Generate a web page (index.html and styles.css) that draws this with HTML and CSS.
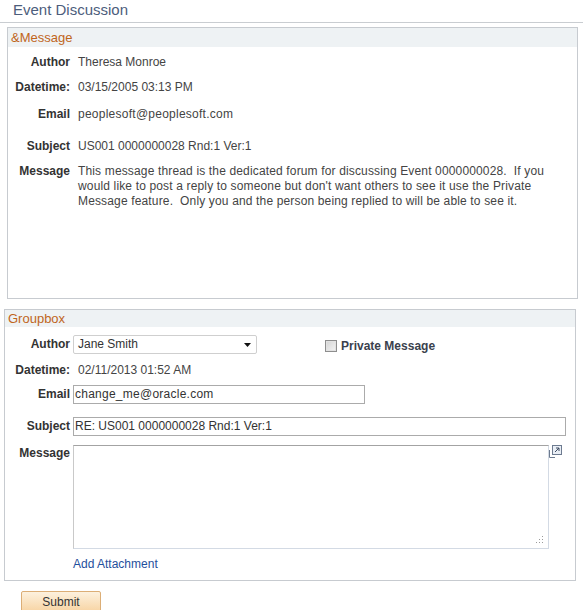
FILE: index.html
```html
<!DOCTYPE html>
<html>
<head>
<meta charset="utf-8">
<title>Event Discussion</title>
<link rel="stylesheet" href="styles.css">
</head>
<body>
<div class="page-header">
  <h1 class="page-title">Event Discussion</h1>
</div>

<section class="box box-message">
  <div class="box-head">&amp;Message</div>
  <div class="row r1"><span class="lbl">Author</span><span class="val">Theresa Monroe</span></div>
  <div class="row r2"><span class="lbl">Datetime:</span><span class="val">03/15/2005 03:13 PM</span></div>
  <div class="row r3"><span class="lbl">Email</span><span class="val wide">peoplesoft@peoplesoft.com</span></div>
  <div class="row r4"><span class="lbl">Subject</span><span class="val">US001 0000000028 Rnd:1 Ver:1</span></div>
  <div class="row r5"><span class="lbl">Message</span><span class="val msg">This message thread is the dedicated forum for discussing Event 0000000028.&nbsp; If you<br>would like to post a reply to someone but don't want others to see it use the Private<br>Message feature.&nbsp; Only you and the person being replied to will be able to see it.</span></div>
</section>

<section class="box box-group">
  <div class="box-head">Groupbox</div>
  <div class="frow g1">
    <span class="flbl">Author</span>
    <div class="select"><span>Jane Smith</span><svg width="7" height="4" viewBox="0 0 7 4"><path d="M0 0H7L3.5 4Z" fill="#111"/></svg></div>
    <span class="check"></span><span class="check-lbl">Private Message</span>
  </div>
  <div class="frow g2"><span class="flbl">Datetime:</span><span class="fval">02/11/2013 01:52 AM</span></div>
  <div class="frow g3"><span class="flbl">Email</span><div class="input email">change_me@oracle.com</div></div>
  <div class="frow g4"><span class="flbl">Subject</span><div class="input subject">RE: US001 0000000028 Rnd:1 Ver:1</div></div>
  <div class="frow g5">
    <span class="flbl top">Message</span>
    <div class="area-wrap">
      <div class="area"></div>
      <svg class="grip" width="8" height="8" viewBox="0 0 8 8"><g fill="#9a9a9a"><rect x="6" y="0" width="1" height="1"/><rect x="3" y="3" width="1" height="1"/><rect x="6" y="3" width="1" height="1"/><rect x="0" y="6" width="1" height="1"/><rect x="3" y="6" width="1" height="1"/><rect x="6" y="6" width="1" height="1"/></g></svg>
    </div>
    <svg class="expand" width="16" height="13" viewBox="0 0 16 13"><path d="M0.5 5V12.5H6" fill="none" stroke="#6d7b90"/><rect x="3.5" y="0.5" width="9" height="9" fill="#e9eef5" stroke="#6d7b90"/><path d="M6 7L10 3M7 3H10V6" fill="none" stroke="#3d4a60"/></svg>
  </div>
  <div class="frow g6"><a class="link" href="#">Add Attachment</a></div>
</section>

<div class="actions"><button class="btn" type="button">Submit</button></div>
</body>
</html>
```

FILE: styles.css
```css
html, body {
  margin: 0;
  padding: 0;
  background: #fff;
  overflow: hidden;
}
body {
  font-family: Arial, "Liberation Sans", sans-serif;
  font-size: 12px;
  color: #333;
}
.page-header {
  border-bottom: 1px solid #c9cdd1;
  padding: 0 0 2px 13px;
}
.page-title {
  margin: 0;
  font-weight: normal;
  font-size: 15px;
  line-height: 20px;
  color: #4c5d7c;
}
.box {
  box-sizing: border-box;
  border: 1px solid #c7cbd0;
  height: 272px;
}
.box-message {
  margin: 4px 0 0 7px;
  width: 571px;
}
.box-group {
  margin: 10px 0 0 4px;
  width: 572px;
}
.box-head {
  background: #eef2f4;
  color: #c0651b;
  font-size: 13px;
  padding-left: 3px;
}
.box-message .box-head { height: 19px; line-height: 19px; }
.box-group .box-head { height: 17px; line-height: 17px; }

.row {
  display: flex;
  line-height: 15px;
}
.lbl {
  width: 62px;
  flex: none;
  text-align: right;
  font-weight: bold;
  color: #333;
}
.val {
  margin-left: 8px;
  color: #444;
  white-space: nowrap;
}
.val.wide { letter-spacing: 0.25px; }
.val.msg { letter-spacing: 0.15px; }
.r1 { margin-top: 8px; }
.r2 { margin-top: 10px; }
.r3 { margin-top: 12px; }
.r4 { margin-top: 17px; }
.r5 { margin-top: 10px; }

.frow {
  display: flex;
  align-items: center;
  line-height: 15px;
}
.flbl {
  width: 65px;
  flex: none;
  text-align: right;
  font-weight: bold;
  color: #333;
  margin-right: 3px;
}
.flbl.top { align-self: flex-start; margin-top: 1px; }
.fval { margin-left: 5px; color: #444; }
.g1 { margin-top: 8px; height: 19px; }
.g2 { margin-top: 9px; }
.g3 { margin-top: 7px; }
.g4 { margin-top: 13px; }
.g5 { margin-top: 9px; align-items: flex-start; }
.g6 { margin-top: 8px; padding-left: 68px; }

.select {
  box-sizing: border-box;
  width: 184px;
  height: 19px;
  border: 1px solid #cfcfcf;
  border-radius: 2px;
  display: flex;
  align-items: center;
  justify-content: space-between;
  padding: 0 5px 0 4px;
  color: #333;
}
.check {
  box-sizing: border-box;
  width: 12px;
  height: 12px;
  margin-left: 68px;
  margin-top: 2px;
  border: 1px solid #8e8e8e;
  background: linear-gradient(135deg, #d4d4d4, #f4f4f4);
  box-shadow: inset 0 0 0 1px #e2e2e2;
}
.check-lbl {
  margin-left: 4px;
  margin-top: 3px;
  font-weight: bold;
  color: #3a414d;
}
.input {
  box-sizing: border-box;
  height: 19px;
  border: 1px solid #ababab;
  padding: 0 1px;
  line-height: 17px;
  color: #333;
  white-space: nowrap;
}
.input.email { width: 292px; letter-spacing: 0.25px; }
.input.subject { width: 493px; }

.area-wrap {
  position: relative;
}
.area {
  box-sizing: border-box;
  width: 476px;
  height: 104px;
  border: 1px solid;
  border-color: #a3a3a3 #d3dae4 #d3dae4 #c9c9c9;
}
.grip {
  position: absolute;
  right: 5px;
  bottom: 5px;
}
.expand {
  display: block;
}
.link {
  color: #1f4f9c;
  text-decoration: none;
}
.actions {
  margin-top: 10px;
  padding-left: 21px;
}
.btn {
  box-sizing: border-box;
  width: 80px;
  height: 22px;
  margin: 0;
  padding: 0;
  border: 1px solid #dcae76;
  border-radius: 2px;
  background: linear-gradient(#fdf1de, #f7d3a2);
  font-family: Arial, "Liberation Sans", sans-serif;
  font-size: 12px;
  line-height: 20px;
  color: #333;
}
```
